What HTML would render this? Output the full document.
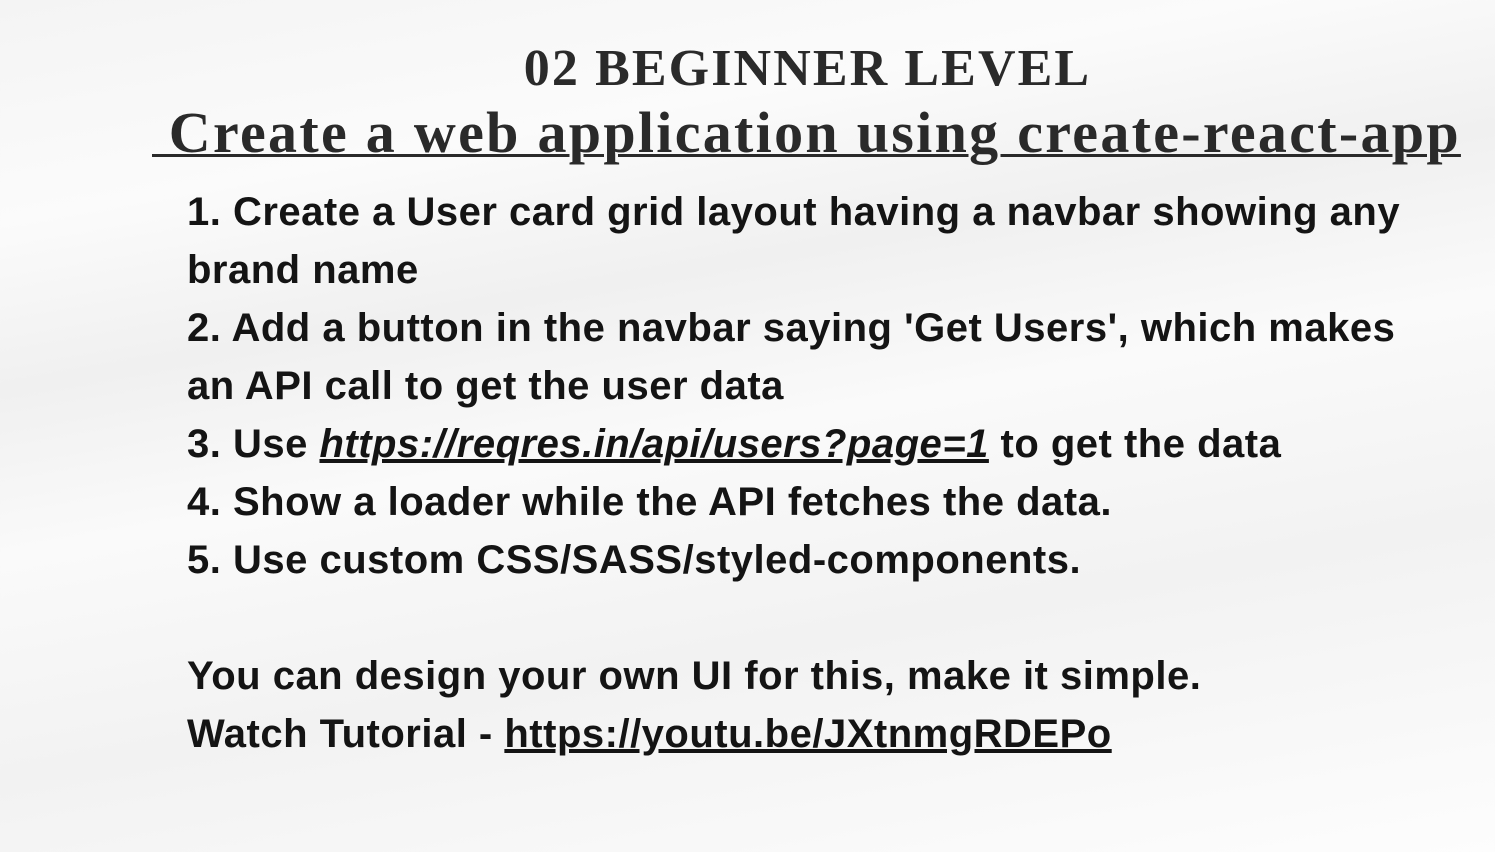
<!DOCTYPE html>
<html><head><meta charset="utf-8"><style>
html,body{margin:0;padding:0}
body{width:1495px;height:852px;overflow:hidden;position:relative;
background:linear-gradient(170deg,#f4f4f4 0%,#fbfbfb 20%,#f0f0f0 35%,#fafafa 50%,#f2f2f2 70%,#fdfdfd 100%);color:#1a1a1a}
.t1{position:absolute;left:0;width:1615px;text-align:center;top:39px;font:bold 52px/60px "Liberation Serif",serif;letter-spacing:2.1px;color:#2a2a2a}
.t2{position:absolute;left:152px;top:99px;font:bold 58px/68px "Liberation Serif",serif;text-decoration:underline;text-decoration-thickness:3px;color:#2a2a2a;white-space:pre;letter-spacing:2.3px}
.b{position:absolute;left:187px;top:183px;font:bold 40px/58px "Liberation Sans",sans-serif;letter-spacing:0.5px;white-space:pre;color:#141414}
.b a{color:#141414;text-decoration:underline}
</style></head><body>
<div class="t1">02 BEGINNER LEVEL</div>
<div class="t2"> Create a web application using create-react-app</div>
<div class="b">1. Create a User card grid layout having a navbar showing any
brand name
2. Add a button in the navbar saying 'Get Users', which makes
an API call to get the user data
3. Use <a><i>https://reqres.in/api/users?page=1</i></a> to get the data
4. Show a loader while the API fetches the data.
5. Use custom CSS/SASS/styled-components.

You can design your own UI for this, make it simple.
Watch Tutorial - <a>https://youtu.be/JXtnmgRDEPo</a></div>
</body></html>
